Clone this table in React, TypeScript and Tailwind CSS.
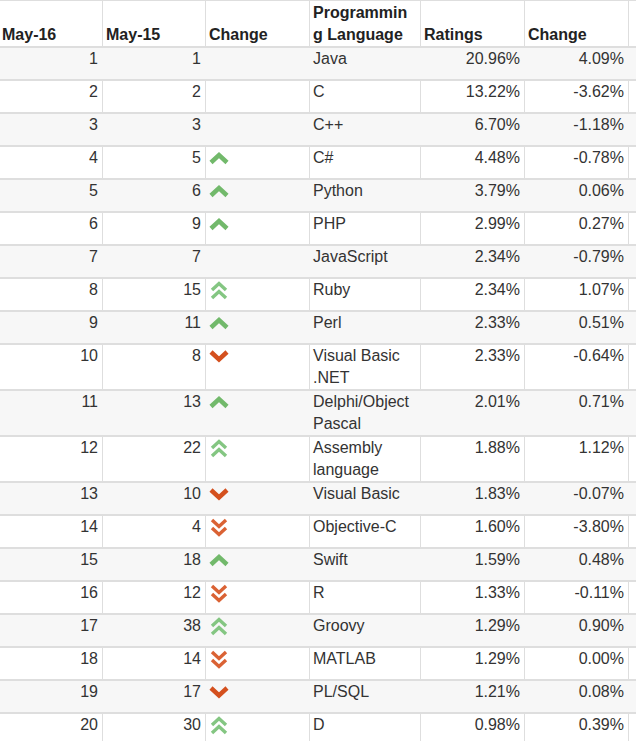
import React from 'react';

type Trend = 'none' | 'up' | 'up2' | 'down' | 'down2';

type Row = {
  now: number;
  prev: number;
  trend: Trend;
  lang: string;
  rating: string;
  change: string;
};

const rows: Row[] = [
  { now: 1, prev: 1, trend: 'none', lang: 'Java', rating: '20.96%', change: '4.09%' },
  { now: 2, prev: 2, trend: 'none', lang: 'C', rating: '13.22%', change: '-3.62%' },
  { now: 3, prev: 3, trend: 'none', lang: 'C++', rating: '6.70%', change: '-1.18%' },
  { now: 4, prev: 5, trend: 'up', lang: 'C#', rating: '4.48%', change: '-0.78%' },
  { now: 5, prev: 6, trend: 'up', lang: 'Python', rating: '3.79%', change: '0.06%' },
  { now: 6, prev: 9, trend: 'up', lang: 'PHP', rating: '2.99%', change: '0.27%' },
  { now: 7, prev: 7, trend: 'none', lang: 'JavaScript', rating: '2.34%', change: '-0.79%' },
  { now: 8, prev: 15, trend: 'up2', lang: 'Ruby', rating: '2.34%', change: '1.07%' },
  { now: 9, prev: 11, trend: 'up', lang: 'Perl', rating: '2.33%', change: '0.51%' },
  { now: 10, prev: 8, trend: 'down', lang: 'Visual Basic .NET', rating: '2.33%', change: '-0.64%' },
  { now: 11, prev: 13, trend: 'up', lang: 'Delphi/Object Pascal', rating: '2.01%', change: '0.71%' },
  { now: 12, prev: 22, trend: 'up2', lang: 'Assembly language', rating: '1.88%', change: '1.12%' },
  { now: 13, prev: 10, trend: 'down', lang: 'Visual Basic', rating: '1.83%', change: '-0.07%' },
  { now: 14, prev: 4, trend: 'down2', lang: 'Objective-C', rating: '1.60%', change: '-3.80%' },
  { now: 15, prev: 18, trend: 'up', lang: 'Swift', rating: '1.59%', change: '0.48%' },
  { now: 16, prev: 12, trend: 'down2', lang: 'R', rating: '1.33%', change: '-0.11%' },
  { now: 17, prev: 38, trend: 'up2', lang: 'Groovy', rating: '1.29%', change: '0.90%' },
  { now: 18, prev: 14, trend: 'down2', lang: 'MATLAB', rating: '1.29%', change: '0.00%' },
  { now: 19, prev: 17, trend: 'down', lang: 'PL/SQL', rating: '1.21%', change: '0.08%' },
  { now: 20, prev: 30, trend: 'up2', lang: 'D', rating: '0.98%', change: '0.39%' },
];

const TrendIcon = ({ trend }: { trend: Trend }) => {
  if (trend === 'none') return null;
  if (trend === 'up')
    return (
      <svg width="22" height="14" viewBox="0 0 22 14" className="mt-[4px]">
        <polyline points="3,11.5 11,4 19,11.5" fill="none" stroke="#72b96b" strokeWidth="4.5" />
      </svg>
    );
  if (trend === 'down')
    return (
      <svg width="22" height="14" viewBox="0 0 22 14" className="mt-[4px]">
        <polyline points="3,3 11,10.5 19,3" fill="none" stroke="#d4501e" strokeWidth="4.5" />
      </svg>
    );
  if (trend === 'up2')
    return (
      <svg width="22" height="21" viewBox="0 0 22 21" className="mt-[1px]">
        <polyline points="4,10 11,3.5 18,10" fill="none" stroke="#84c682" strokeWidth="3.4" />
        <polyline points="4,18 11,11.5 18,18" fill="none" stroke="#84c682" strokeWidth="3.4" />
      </svg>
    );
  return (
    <svg width="22" height="21" viewBox="0 0 22 21" className="mt-[1px]">
      <polyline points="4,3 11,9.5 18,3" fill="none" stroke="#da6234" strokeWidth="3.4" />
      <polyline points="4,11 11,17.5 18,11" fill="none" stroke="#da6234" strokeWidth="3.4" />
    </svg>
  );
};

const grid = 'grid grid-cols-[103px_103px_104px_111px_104px_104px_7px]';

const App = () => {
  return (
    <div
      className="w-[636px] bg-white text-[16px] leading-[22px] text-[#333]"
      style={{ fontFamily: '"Liberation Sans", Arial, sans-serif' }}
    >
      {/* header */}
      <div className={`${grid} border-t border-b-2 border-[#dedede] font-bold text-[#222]`}>
        <div className="flex h-[45px] items-end border-r border-[#dedede] pl-[2px]">May-16</div>
        <div className="flex items-end border-r border-[#dedede] pl-[3px]">May-15</div>
        <div className="flex items-end border-r border-[#dedede] pl-[3px]">Change</div>
        <div className="flex items-end border-r border-[#dedede] pl-[3px]">
          Programmin
          <br />
          g Language
        </div>
        <div className="flex items-end border-r border-[#dedede] pl-[3px]">Ratings</div>
        <div className="flex items-end border-r border-[#dedede] pl-[3px]">Change</div>
        <div />
      </div>

      {rows.map((r, i) => {
        const odd = i % 2 === 0;
        const line = odd ? 'border-[#f7f7f7]' : 'border-[#dedede]';
        return (
          <div
            key={r.now}
            className={`${grid} border-b-2 border-[#dedede] ${odd ? 'bg-[#f7f7f7]' : 'bg-white'}`}
          >
            <div className={`min-h-[31px] border-r ${line} pr-[4px] text-right`}>{r.now}</div>
            <div className={`border-r ${line} pr-[4px] text-right`}>{r.prev}</div>
            <div className={`border-r ${line} pl-[2px]`}>
              <TrendIcon trend={r.trend} />
            </div>
            <div className={`border-r ${line} pl-[3px]`}>{r.lang}</div>
            <div className={`border-r ${line} pr-[4px] text-right`}>{r.rating}</div>
            <div className={`border-r ${line} pr-[4px] text-right`}>{r.change}</div>
            <div />
          </div>
        );
      })}
    </div>
  );
};

export default App;
